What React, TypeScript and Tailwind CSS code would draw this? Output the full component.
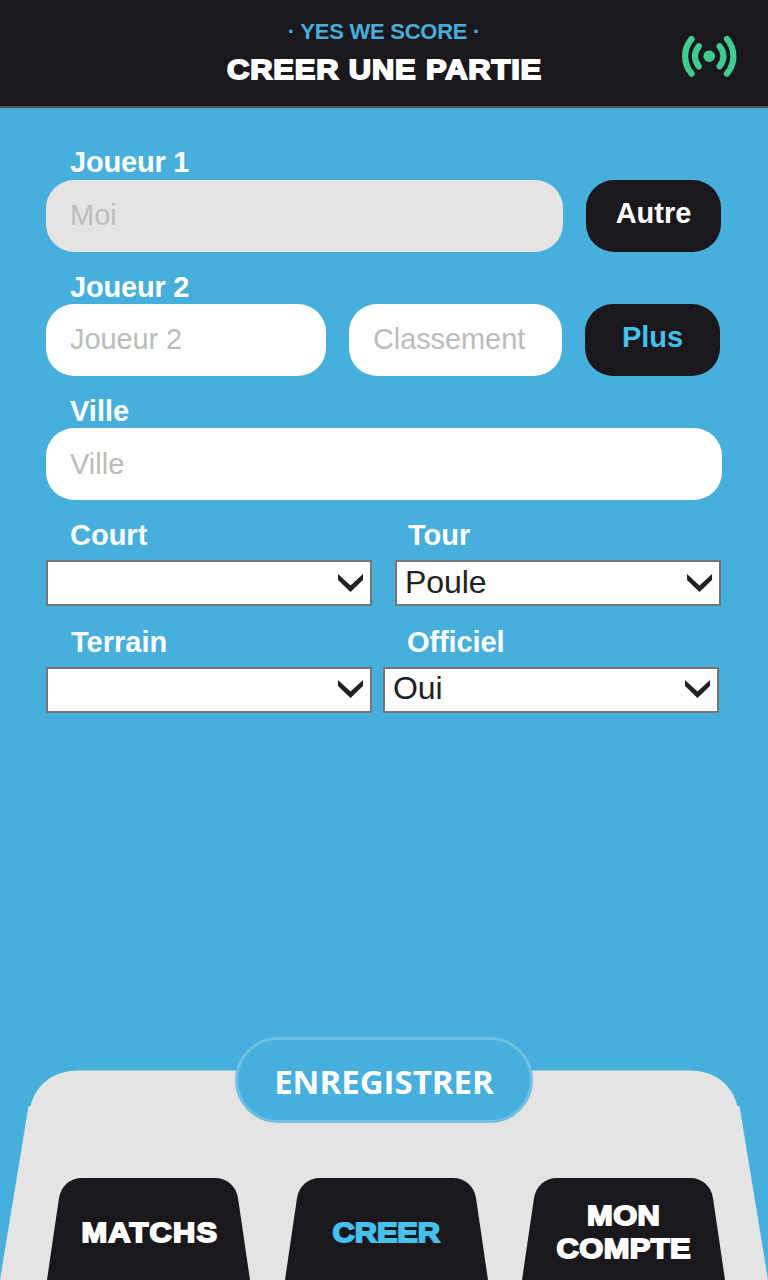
import React from "react";

const sans = "font-['Liberation_Sans',Arial,sans-serif]";
const heavy =
  "font-['Liberation_Sans',Arial,sans-serif] font-bold text-[28.3px] scale-x-[1.09] whitespace-nowrap [-webkit-text-stroke:1.8px_currentColor]";

function Label({ text, className = "" }: { text: string; className?: string }) {
  return (
    <div className={`pl-6 text-[29px] font-bold leading-9 whitespace-nowrap text-white ${className}`}>
      <span>{text}</span>
    </div>
  );
}

function Field({ placeholder, className = "", disabled = false }: { placeholder: string; className?: string; disabled?: boolean }) {
  return (
    <input
      type="text"
      placeholder={placeholder}
      disabled={disabled}
      className={`min-w-0 rounded-[28px] px-6 text-[29px] leading-9 outline-none placeholder:text-[#bcbcbc] placeholder:opacity-100 ${
        disabled ? "bg-[#e4e4e4]" : "bg-white"
      } ${className}`}
    />
  );
}

function Select({ value, className = "" }: { value: string; className?: string }) {
  return (
    <div className={`flex items-center justify-between border-2 border-[#757575] bg-white pr-[7px] pb-px pl-2 text-[32px] tracking-[-0.1px] text-[#212121] ${className}`}>
      <span className="-mt-0.5 leading-9">{value}</span>
      <svg viewBox="0 0 25 18" className="h-[18px] w-[25px] shrink-0">
        <path d="M0 0L12.5 11.5L25 0V6L12.5 18L0 6Z" fill="#212121" />
      </svg>
    </div>
  );
}

function SignalIcon() {
  return (
    <svg viewBox="681 35 57 43" className="h-[43px] w-[57px]" fill="none" stroke="#42cb91" strokeWidth="6.2" strokeLinecap="round">
      <circle cx="709.2" cy="56.2" r="5.8" fill="#42cb91" stroke="none" />
      <path d="M691.5 39C683 49 683 63.5 691.5 73.6" />
      <path d="M698.8 46.2C693.7 52.5 693.7 60 698.8 66.4" />
      <path d="M727 39C735.5 49 735.5 63.5 727 73.6" />
      <path d="M719.6 46.2C724.7 52.5 724.7 60 719.6 66.4" />
    </svg>
  );
}

function Tab({ lines, tracking, active = false }: { lines: string[]; tracking: string; active?: boolean }) {
  return (
    <button className="relative flex h-[102px] w-[203px] flex-col items-center justify-center pt-[6px]">
      <svg viewBox="0 0 203 102" className="absolute inset-0 h-full w-full">
        <path d="M0 102L12 20C14 8 23 0 35 0H168C180 0 189 8 191 20L203 102Z" fill="#1a181d" />
      </svg>
      {lines.map((line) => (
        <span
          key={line}
          className={`relative leading-[33px] ${heavy} ${tracking} ${active ? "text-[#46c0ec]" : "text-white"}`}
        >
          {line}
        </span>
      ))}
    </button>
  );
}

export default function App() {
  return (
    <div className={`flex h-[1280px] w-[768px] flex-col overflow-hidden bg-[#46afdb] ${sans}`}>
      <header className="relative flex h-[108px] shrink-0 flex-col items-center border-b-2 border-[#555459] bg-[#1a181d] pt-[19px]">
        <p className="text-[22px] font-bold leading-[26px] tracking-[-0.25px] text-[#46afdb]">· YES WE SCORE ·</p>
        <h1 className={`mt-[7px] pl-px leading-[34px] tracking-[0.8px] text-white ${heavy}`}>CREER UNE PARTIE</h1>
        <div className="absolute top-[35px] right-[30px]">
          <SignalIcon />
        </div>
      </header>

      <main className="flex grow flex-col px-[46px] pt-9">
        <Label text="Joueur 1" className="h-9 tracking-[-0.2px]" />
        <div className="flex h-[71.5px] gap-[23px]">
          <Field placeholder="Moi" disabled className="w-[517px] pb-0.5" />
          <button className="w-[135px] rounded-[28px] bg-[#1a181d] pb-[5px] text-[29px] font-bold text-white">Autre</button>
        </div>

        <Label text="Joueur 2" className="mt-[17px] h-[35.5px] tracking-[-0.2px]" />
        <div className="flex h-[72px] gap-[23px]">
          <Field placeholder="Joueur 2" className="w-[280px] pb-0.5 tracking-[-0.1px]" />
          <Field placeholder="Classement" className="w-[213px] pb-0.5 tracking-[-0.1px]" />
          <button className="w-[135px] rounded-[28px] bg-[#1a181d] pb-[5px] text-[29px] font-bold text-[#46c0ec]">Plus</button>
        </div>

        <Label text="Ville" className="mt-[17px] h-[35.3px]" />
        <Field placeholder="Ville" className="h-[72px] w-[676.3px] shrink-0" />

        <div className="mt-[16.7px] flex">
          <Label text="Court" className="w-[338px]" />
          <Label text="Tour" className="w-[338px]" />
        </div>
        <div className="mt-[7.5px] flex gap-[23px]">
          <Select value="" className="h-[46px] w-[326px]" />
          <Select value="Poule" className="h-[46px] w-[326px]" />
        </div>
        <div className="mt-[17.5px] flex">
          <Label text="Terrain" className="w-[337px] pl-[25px]" />
          <Label text="Officiel" className="w-[338px] tracking-[-0.1px]" />
        </div>
        <div className="mt-[7px] flex gap-[11px]">
          <Select value="" className="h-[46px] w-[326px]" />
          <Select value="Oui" className="h-[46px] w-[336px]" />
        </div>
      </main>

      <footer className="relative flex h-[243px] shrink-0 flex-col items-center justify-between">
        <svg viewBox="0 0 768 210" className="absolute bottom-0 left-0 h-[210px] w-full">
          <path d="M0 210L28.5 36H30.5C36 14 54 0.5 78 0.5H690C714 0.5 732 14 737.5 36H739.5L768 210Z" fill="#e4e4e4" />
        </svg>
        <button className="relative h-[86px] w-[298px] rounded-[43px] border-[3px] border-[#6ec1e2] bg-[#46afdd] pt-[3px] font-['Open_Sans','Noto_Sans',sans-serif] text-[33px] font-bold text-white">
          ENREGISTRER
        </button>
        <nav className="flex gap-[34.5px] pl-1">
          <Tab lines={["MATCHS"]} tracking="tracking-[1.1px] pl-[2px]" />
          <Tab lines={["CREER"]} tracking="tracking-[-0.1px]" active />
          <Tab lines={["MON", "COMPTE"]} tracking="tracking-[0.4px] pl-px" />
        </nav>
      </footer>
    </div>
  );
}
